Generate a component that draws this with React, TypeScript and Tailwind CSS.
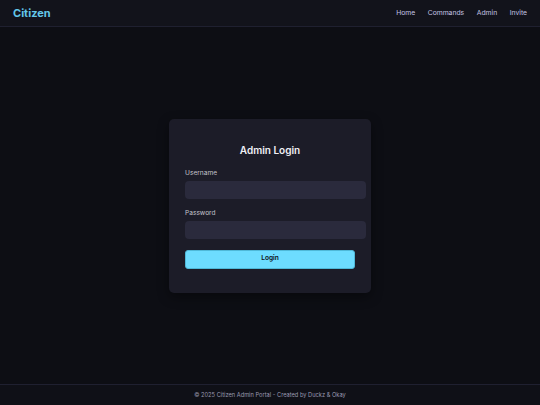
import React from "react";

export default function App() {
  return (
    <div
      className="flex h-[405px] w-full flex-col bg-[#0d0e14] text-white"
      style={{ fontFamily: "Inter, 'Noto Sans', sans-serif" }}
    >
      <header className="flex h-[27px] shrink-0 items-center justify-between border-b border-[#1f2030] bg-[#12131b] pl-[13px] pr-[13px]">
        <div className="text-[11px] font-bold leading-none text-[#63c6e8]">Citizen</div>
        <nav className="flex items-center gap-[12.5px] text-[6.8px] leading-none text-[#c4c4e4]">
          <span>Home</span>
          <span>Commands</span>
          <span>Admin</span>
          <span>Invite</span>
        </nav>
      </header>
      <main className="flex flex-1 items-center justify-center">
        <div className="w-[202px] rounded-[5px] bg-[#1c1c28] px-[16px] pb-[24px] pt-[24px] shadow-[0_4px_12px_rgba(0,0,0,0.4)]">
          <h1 className="text-center text-[10px] font-semibold leading-[14px] text-[#f0f0f5]">Admin Login</h1>
          <div className="mt-[12px] text-[6.6px] leading-[9px] text-[#c4c4cc]">Username</div>
          <div className="mt-[3px] h-[18px] w-[181px] rounded-[4px] bg-[#2a2a3c]" />
          <div className="mt-[10px] text-[6.6px] leading-[9px] text-[#c4c4cc]">Password</div>
          <div className="mt-[3px] h-[18px] w-[181px] rounded-[4px] bg-[#2a2a3c]" />
          <button className="mt-[11px] flex h-[19px] w-[170px] items-center justify-center rounded-[3px] border border-[#4fb8d8] bg-[#6ddcff] text-[6.6px] font-semibold text-[#0d0e14]">
            Login
          </button>
        </div>
      </main>
      <footer className="flex h-[21px] shrink-0 items-center justify-center border-t border-[#1f2030] bg-[#0f1017] text-[5.7px] text-[#9a9ab0]">
        © 2025 Citizen Admin Portal - Created by Duckz &amp; Okay
      </footer>
    </div>
  );
}
